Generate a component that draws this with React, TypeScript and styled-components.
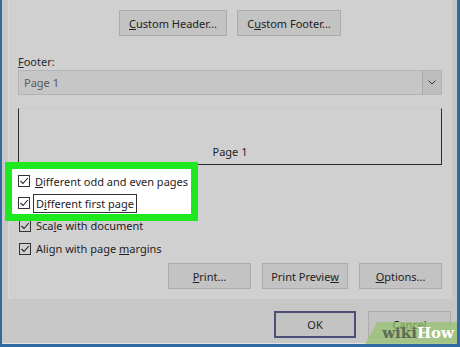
import styled, { createGlobalStyle } from "styled-components";

const GlobalStyle = createGlobalStyle`
  html, body {
    margin: 0;
    padding: 0;
    background: #c6c6c6;
  }
  body {
    font-family: "Noto Sans", "Open Sans", sans-serif;
    font-size: 11px;
    color: #1e1e1e;
  }
`;

const Window = styled.div`
  position: relative;
  width: 460px;
  height: 347px;
  box-sizing: border-box;
  background: #c7c7c7;
  border-left: 2px solid #2f6aa0;
  border-right: 3px solid #2f6aa0;
  border-bottom: 3px solid #2f6aa0;
  display: flex;
  flex-direction: column;
  overflow: hidden;
`;

const Panel = styled.div`
  margin: 0 5px 0 6px;
  height: 299px;
  box-sizing: border-box;
  background: #d0d0d0;
  border-left: 1px solid #d9d9d9;
  padding: 10px 10px 0 9px;
  display: flex;
  flex-direction: column;
`;

const ButtonRow = styled.div<{ $align?: string }>`
  display: flex;
  justify-content: ${(p) => p.$align || "center"};
  gap: ${(p) => (p.$align ? "11px" : "10px")};
`;

const Button = styled.div<{ $w: number; $h?: number; $default?: boolean }>`
  width: ${(p) => p.$w}px;
  height: ${(p) => p.$h || 26}px;
  box-sizing: border-box;
  background: #c3c3c3;
  border: ${(p) => (p.$default ? "2px solid #4c4f78" : "1px solid #acacac")};
  display: flex;
  align-items: center;
  justify-content: center;
  color: #222;
`;

const Label = styled.div`
  margin-top: 17px;
  height: 17px;
  line-height: 17px;
  color: #2a2a2a;
`;

const Combo = styled.div`
  height: 25px;
  box-sizing: border-box;
  border: 1px solid #b4b4b4;
  background: #c6c6c6;
  display: flex;
  align-items: stretch;
`;

const ComboText = styled.div`
  flex: 1;
  padding-left: 5px;
  display: flex;
  align-items: center;
  color: #5a5a5a;
`;

const ComboArrow = styled.div`
  width: 18px;
  border-left: 1px solid #aaaaaa;
  background: #bdbdbd;
  display: flex;
  align-items: center;
  justify-content: center;
`;

const Preview = styled.div`
  margin-top: 13px;
  height: 57px;
  box-sizing: border-box;
  border: 1px solid #2c2c2c;
  border-top-color: #c9c9c9;
  display: flex;
  align-items: flex-end;
  justify-content: center;
  padding-bottom: 5px;
  color: #222;
`;

const Highlight = styled.div`
  position: relative;
  margin: 4px 0 0 -6px;
  width: 179px;
  padding: 1px 0 0 6px;
  box-sizing: border-box;
  background: #ffffff;
  outline: 7px solid #1ee81e;
  z-index: 1;
`;

const CheckRow = styled.div<{ $h?: number }>`
  height: ${(p) => p.$h || 23}px;
  display: flex;
  align-items: center;
  gap: 5px;
  white-space: nowrap;
`;

const PlainRows = styled.div`
  padding-left: 1px;
`;

const Box = styled.div`
  width: 12px;
  height: 12px;
  box-sizing: border-box;
  border: 1px solid #333;
  flex-shrink: 0;
  display: flex;
  align-items: center;
  justify-content: center;
`;

const Focus = styled.span`
  outline: 1px solid #333;
  outline-offset: 1px;
  padding: 0 1px;
`;

const Footer = styled.div`
  flex: 1;
  display: flex;
  justify-content: flex-end;
  align-items: flex-start;
  gap: 12px;
  padding: 12px 6px 0 0;
  border-bottom: 1px solid #e2e2e2;
`;

const Watermark = styled.div`
  position: absolute;
  right: 0;
  bottom: 0;
  width: 92px;
  height: 22px;
  background: rgba(150, 196, 110, 0.72);
  clip-path: polygon(12px 0, 100% 0, 100% 100%, 0 100%);
  display: flex;
  align-items: flex-end;
  justify-content: flex-end;
  padding: 0 3px 3px 0;
  box-sizing: border-box;
  font-family: "DejaVu Serif", "Liberation Serif", serif;
  font-weight: bold;
  font-size: 15px;
  line-height: 16px;
`;

const Wiki = styled.span`
  color: #5c6b52;
`;

const How = styled.span`
  color: #ffffff;
`;

const Check = () => (
  <Box>
    <svg width="10" height="10" viewBox="0 0 10 10">
      <path d="M1.5 5 L4 7.5 L8.8 2" fill="none" stroke="#222" strokeWidth="1.1" />
    </svg>
  </Box>
);

export default function App() {
  return (
    <>
      <GlobalStyle />
      <Window>
        <Panel>
          <ButtonRow>
            <Button $w={108}>
              <span>
                <u>C</u>ustom Header...
              </span>
            </Button>
            <Button $w={104}>
              <span>
                C<u>u</u>stom Footer...
              </span>
            </Button>
          </ButtonRow>
          <Label>
            <u>F</u>ooter:
          </Label>
          <Combo>
            <ComboText>Page 1</ComboText>
            <ComboArrow>
              <svg width="8" height="5" viewBox="0 0 8 5">
                <path d="M0.5 0.5 L4 4 L7.5 0.5" fill="none" stroke="#333" strokeWidth="1" />
              </svg>
            </ComboArrow>
          </Combo>
          <Preview>Page 1</Preview>
          <Highlight>
            <CheckRow $h={22}>
              <Check />
              <span>
                <u>D</u>ifferent odd and even pages
              </span>
            </CheckRow>
            <CheckRow $h={22}>
              <Check />
              <Focus>
                D<u>i</u>fferent first page
              </Focus>
            </CheckRow>
          </Highlight>
          <PlainRows>
            <CheckRow>
              <Check />
              <span>
                Sca<u>l</u>e with document
              </span>
            </CheckRow>
            <CheckRow>
              <Check />
              <span>
                Align with page <u>m</u>argins
              </span>
            </CheckRow>
          </PlainRows>
          <ButtonRow $align="flex-end" style={{ marginTop: 3 }}>
            <Button $w={83}>
              <span>
                <u>P</u>rint...
              </span>
            </Button>
            <Button $w={86}>
              <span>
                Print Previe<u>w</u>
              </span>
            </Button>
            <Button $w={83}>
              <span>
                <u>O</u>ptions...
              </span>
            </Button>
          </ButtonRow>
        </Panel>
        <Footer>
          <Button $w={82} $h={27} $default>
            OK
          </Button>
          <Button $w={83} $h={27}>
            Cancel
          </Button>
        </Footer>
        <Watermark>
          <Wiki>wiki</Wiki>
          <How>How</How>
        </Watermark>
      </Window>
    </>
  );
}
